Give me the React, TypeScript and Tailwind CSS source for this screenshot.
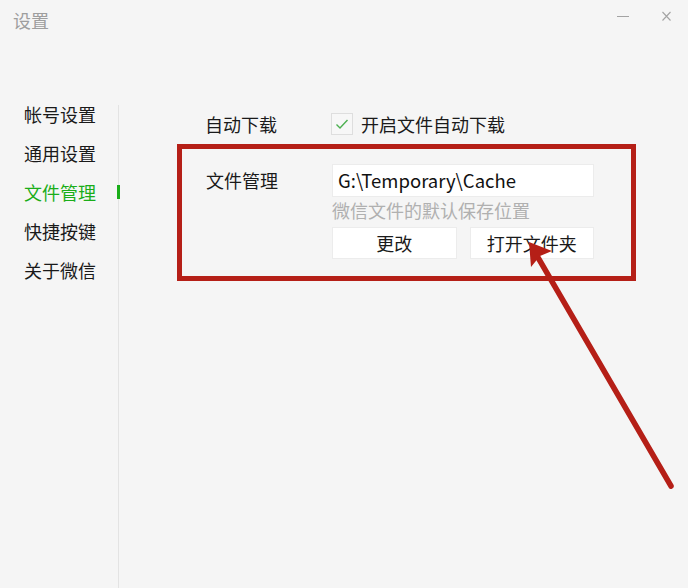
const navItems = ["帐号设置", "通用设置", "文件管理", "快捷按键", "关于微信"];

const App = () => {
  return (
    <div
      className="relative w-[688px] h-[588px] overflow-hidden bg-[#f5f5f5] text-[18px] text-[#1a1a1a]"
      style={{ fontFamily: '"Noto Sans CJK SC", "Microsoft YaHei", sans-serif' }}
    >
      {/* title bar */}
      <div className="flex h-[95px] items-start justify-between">
        <div className="pl-[13px] pt-[8px] leading-[24px] text-[#9e9e9e]">设置</div>
        <div className="flex items-center pt-[11px] pr-[17px]">
          <svg width="12" height="10" viewBox="0 0 12 10" className="mr-[33px]">
            <line x1="0" y1="5.5" x2="12" y2="5.5" stroke="#a3a3a3" strokeWidth="1" />
          </svg>
          <svg width="9" height="10" viewBox="0 0 9 10">
            <path d="M0.5 1 L8.5 9.5 M8.5 1 L0.5 9.5" stroke="#a3a3a3" strokeWidth="1.1" fill="none" />
          </svg>
        </div>
      </div>

      <div className="flex h-[493px]">
        {/* sidebar */}
        <nav className="w-[118px] flex flex-col">
          {navItems.map((item) => (
            <div
              key={item}
              className={
                item === "文件管理"
                  ? "h-[39px] leading-[39px] pl-[24px] text-[#1aad19]"
                  : "h-[39px] leading-[39px] pl-[24px]"
              }
            >
              {item}
            </div>
          ))}
        </nav>
        <div className="relative mt-[10px] w-px bg-[#e3e3e3]">
          <div className="absolute left-[-1px] top-[80px] h-[14px] w-[3px] bg-[#1aad19]" />
        </div>

        {/* content */}
        <div className="flex flex-col pl-[58px]">
          <div className="mt-[18px] flex h-[22px] items-center pl-[28px]">
            <div className="w-[126px]">自动下载</div>
            <div className="flex h-[22px] w-[22px] items-center justify-center border border-[#dedede] bg-[#f7f7f7]">
              <svg width="14" height="12" viewBox="0 0 14 12">
                <path d="M1.5 6.5 L5 10 L12.5 2" stroke="#4cb050" strokeWidth="1.4" fill="none" />
              </svg>
            </div>
            <div className="ml-[8px]">开启文件自动下载</div>
          </div>

          <div className="mt-[9px] w-[459px] border-[5px] border-[#b51f17] pl-[24px] pt-[15px] pb-[17px]">
            <div className="flex">
              <div className="w-[126px] pt-[4px] leading-[24px]">文件管理</div>
              <div className="flex w-[262px] flex-col">
                <div className="flex h-[33px] items-center border border-[#ececec] bg-white pl-[5px] text-[18.5px] text-[#111]">
                  G:\Temporary\Cache
                </div>
                <div className="mt-[1px] leading-[24px] text-[#b0b0b0]">微信文件的默认保存位置</div>
                <div className="mt-[5px] grid grid-cols-2 gap-[13px]">
                  <button className="h-[32px] border border-[#ececec] bg-white text-[18px]">更改</button>
                  <button className="h-[32px] border border-[#ececec] bg-white text-[18px]">打开文件夹</button>
                </div>
              </div>
            </div>
          </div>
        </div>
      </div>

      {/* annotation arrow */}
      <svg className="pointer-events-none absolute left-0 top-0" width="688" height="588" viewBox="0 0 688 588">
        <line x1="671" y1="486" x2="536" y2="254" stroke="#b51f17" strokeWidth="5.5" strokeLinecap="round" />
        <polygon points="529,242 552,251 540,256 531,267" fill="#b51f17" />
      </svg>
    </div>
  );
};

export default App;
